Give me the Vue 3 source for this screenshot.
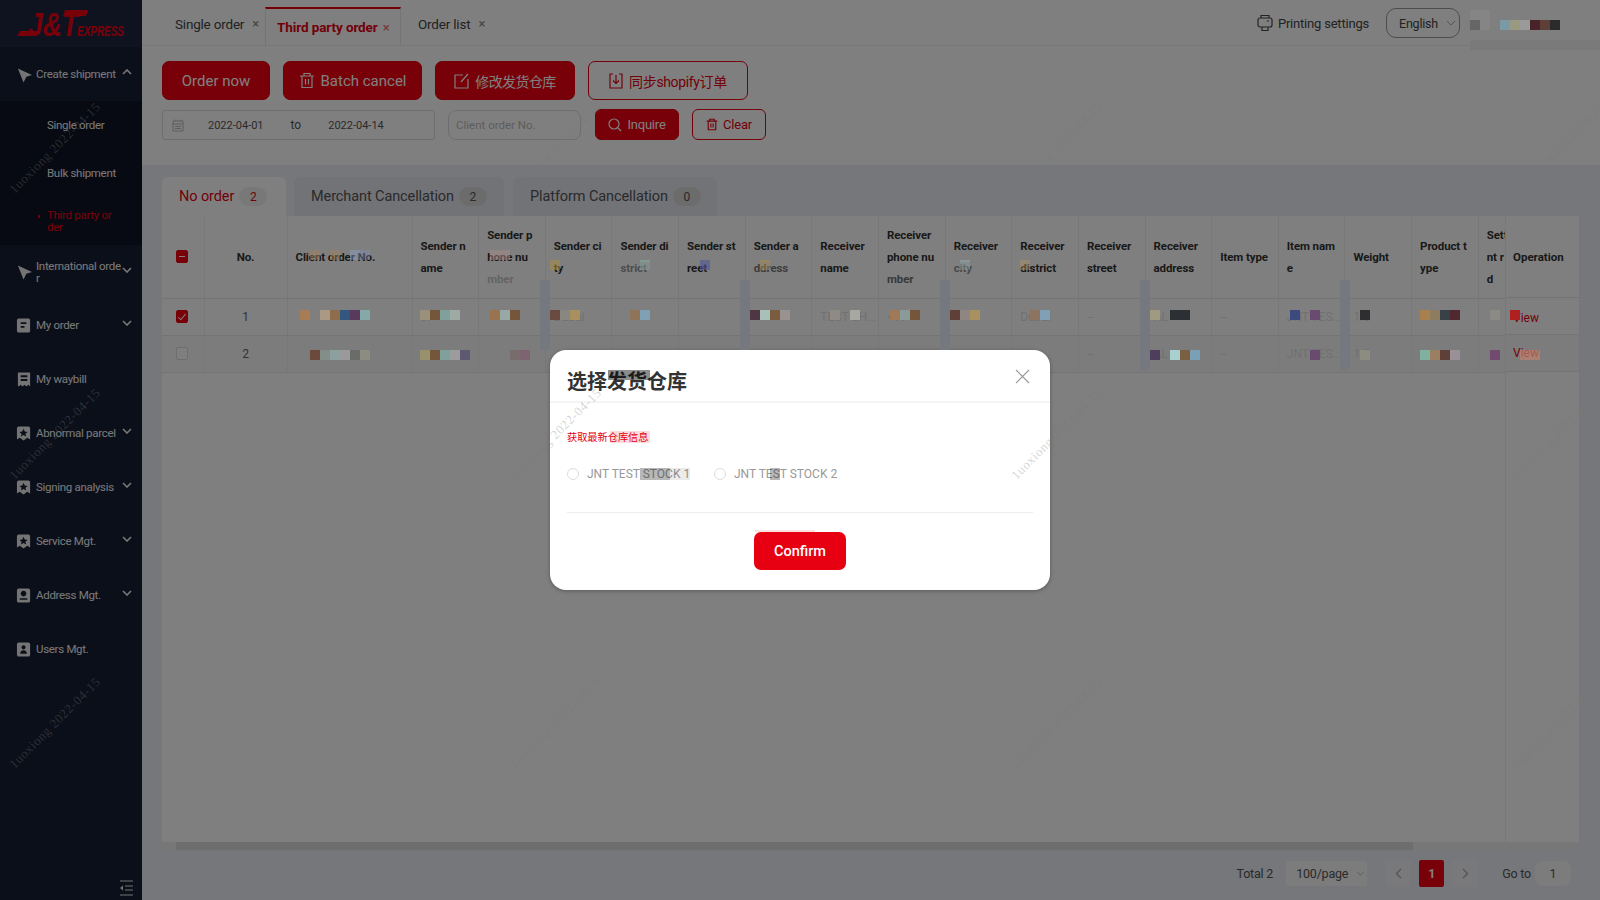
<script setup>
import { ref } from "vue";

const icons = {
  send: "M2 2 L17 9 L11 11 L8 17 Z",
  doc: "M3 1 H13 Q15 1 15 3 V14 Q15 16 13 16 H3 Q1 16 1 14 V3 Q1 1 3 1 Z M5 5 V7 H11 V5 Z M5 9 V11 H9 V9 Z",
  bill: "M2 1 H15 V16 L13 14 L11 16 L9 14 L7 16 L5 14 L3 16 L2 15 Z M5 4 V6 H12 V4 Z M5 8 V10 H12 V8 Z",
  star: "M3 1 H13 Q15 1 15 3 V15 L12 13 L8 16 L4 13 L1 15 V3 Q1 1 3 1 Z M8 3.5 L9.3 6.5 L12.4 6.8 L10 8.8 L10.8 11.8 L8 10.2 L5.2 11.8 L6 8.8 L3.6 6.8 L6.7 6.5 Z",
  addr: "M3 1 H13 Q15 1 15 3 V14 Q15 16 13 16 H3 Q1 16 1 14 V3 Q1 1 3 1 Z M8 3.5 A3 3 0 1 0 8.01 3.5 Z M4 13 H12 V11.5 H4 Z",
  user: "M3 1 H13 Q15 1 15 3 V14 Q15 16 13 16 H3 Q1 16 1 14 V3 Q1 1 3 1 Z M8 4 A2.2 2.2 0 1 0 8.01 4 Z M4.5 13 H11.5 Q11.5 9.2 8 9.2 Q4.5 9.2 4.5 13 Z",
};

const menu = [
  { label: "Create shipment", icon: "send", open: true },
  { label: "International orde\nr", icon: "send", arrow: true, short: true },
  { label: "My order", icon: "doc", arrow: true },
  { label: "My waybill", icon: "bill" },
  { label: "Abnormal parcel", icon: "star", arrow: true },
  { label: "Signing analysis", icon: "star", arrow: true },
  { label: "Service Mgt.", icon: "star", arrow: true },
  { label: "Address Mgt.", icon: "addr", arrow: true },
  { label: "Users Mgt.", icon: "user" },
];

const columns = [
  "Client order No.",
  "Sender n\name",
  "Sender p\nhone nu\nmber",
  "Sender ci\nty",
  "Sender di\nstrict",
  "Sender st\nreet",
  "Sender a\nddress",
  "Receiver\nname",
  "Receiver\nphone nu\nmber",
  "Receiver\ncity",
  "Receiver\ndistrict",
  "Receiver\nstreet",
  "Receiver\naddress",
  "Item type",
  "Item nam\ne",
  "Weight",
  "Product t\nype",
  "Sett\nnt r\nd",
];

const rows = [
  { id: 1, checked: true, cells: ["", "JI", "", "Dubai", "", "", "", "TEST SH...", "+97", "", "Dubai", "--", "AL", "--", "JNT TES...", "1.5", "", ""] },
  { id: 2, checked: false, cells: ["", "", "", "", "", "", "", "", "", "", "", "--", "AL", "--", "JNT TES...", "1.5", "", ""] },
];

const checked = ref(rows.map((r) => r.checked));

// pixelated scribbles and smears sitting on top of the screenshot
function row(y, h, list) {
  return list.map(([x, c, w]) => ({ x, y, w: w || 10, h, c }));
}
const patches = [
  // top right
  { x: 1470, y: 10, w: 20, h: 20, c: "#858585" },
  { x: 1470, y: 40, w: 130, h: 10, c: "#7a7a7a" },
  ...row(20, 10, [
    [1470, "#666666"], [1480, "#858585"], [1500, "#7a9aa5"], [1510, "#9a9a80"],
    [1520, "#9a9a9a"], [1530, "#48242a"], [1540, "#5e3f38"], [1550, "#2b2b2b"],
  ]),
  // vertical smears
  { x: 540, y: 280, w: 10, h: 70, c: "#767880" },
  { x: 740, y: 280, w: 10, h: 70, c: "#767880" },
  { x: 940, y: 280, w: 10, h: 70, c: "#767880" },
  { x: 1140, y: 280, w: 10, h: 90, c: "#767880" },
  { x: 1340, y: 280, w: 10, h: 90, c: "#767880" },
  // header
  ...row(250, 10, [
    [310, "rgba(170,130,90,.45)"], [330, "rgba(170,130,90,.45)"], [350, "rgba(140,165,200,.4)"], [360, "rgba(130,140,180,.4)"],
    [490, "rgba(170,140,140,.5)", 20],
  ]),
  ...row(260, 10, [
    [550, "rgba(170,140,70,.55)"], [640, "rgba(140,180,170,.5)"], [700, "rgba(80,85,150,.6)"],
    [760, "rgba(180,140,70,.5)"], [960, "rgba(150,190,190,.4)"], [1020, "rgba(180,150,100,.4)"],
  ]),
  // faded bits of header text
  { x: 485, y: 272, w: 40, h: 14, c: "rgba(128,128,128,.72)" },
  { x: 618, y: 262, w: 34, h: 14, c: "rgba(128,128,128,.5)" },
  { x: 752, y: 262, w: 38, h: 14, c: "rgba(128,128,128,.35)" },
  { x: 885, y: 272, w: 36, h: 14, c: "rgba(128,128,128,.3)" },
  { x: 952, y: 262, w: 24, h: 14, c: "rgba(128,128,128,.45)" },
  // row 1
  ...row(310, 10, [
    [300, "#a87c55"], [320, "#aa9a85"], [330, "#8e6c4c"], [340, "#33587f"], [350, "#5a3a5c"], [360, "#85a8a8"],
    [420, "#99917a"], [430, "#75563a"], [440, "#80a09c"], [450, "#a0aaa5"],
    [490, "#9a7350"], [500, "#98a8a4"], [510, "#75563a"],
    [550, "#6b4a40"], [560, "#8a8680"], [570, "#a89060"],
    [630, "#90745a"], [640, "#7fa0b5"],
    [750, "#4e3644"], [760, "#a8c0b8"], [770, "#7c5c3e"], [780, "#9a928e"],
    [830, "#908a85"], [850, "#a8a8a0"],
    [890, "#a07a58"], [900, "#8a9a98"], [910, "#75563a"],
    [950, "#5f4038"], [960, "#8e8680"], [970, "#a89060"],
    [1030, "#8d7460"], [1040, "#80a0b5"],
    [1150, "#a09a80"], [1170, "#2c2f33", 20],
    [1290, "#3c4a80"], [1310, "#6b4a70"],
    [1360, "#2e2e30"],
    [1420, "#a8804e"], [1430, "#8e7c60"], [1440, "#3a4048"], [1450, "#502830"],
    [1490, "#8c8a85"], [1510, "#b02020"],
  ]),
  // row 2
  ...row(350, 10, [
    [310, "#6b4a3c"], [320, "#848e88"], [330, "#8ca0a0"], [340, "#9a9a9a"], [350, "#6a6c6a"], [360, "#8c8c80"],
    [420, "#98926c"], [430, "#75563a"], [440, "#80a09c"], [450, "#9c9c9c"], [460, "#5e5870"],
    [510, "#786c6c"], [520, "#7e6470"],
    [1150, "#4e3e5c"], [1170, "#a8d0d0"], [1180, "#7a6040"], [1190, "#7aa0b5"],
    [1310, "#6b4a70"], [1360, "#8c8c80"],
    [1420, "#80b0a0"], [1430, "#9a8060"], [1440, "#5e4038"], [1450, "#9a9098"],
    [1490, "#724a70"],
  ]),
  { x: 1520, y: 350, w: 20, h: 10, c: "rgba(190,130,110,.7)" },
  // dialog
  { x: 608, y: 370, w: 42, h: 10, c: "rgba(0,0,0,.45)" },
  { x: 610, y: 431, w: 40, h: 12, c: "rgba(230,0,18,.14)" },
  { x: 640, y: 468, w: 30, h: 12, c: "rgba(0,0,0,.28)" },
  { x: 670, y: 468, w: 20, h: 12, c: "rgba(0,0,0,.08)" },
  { x: 770, y: 468, w: 10, h: 12, c: "rgba(0,0,0,.28)" },
  { x: 755, y: 530, w: 60, h: 2, c: "rgba(230,0,18,.12)" },
];

const marks = [];
for (const top of [148, 434, 723]) {
  for (const left of [55, 556, 1057, 1558]) {
    marks.push({ left, top });
  }
}
</script>

<template>
  <div class="app">
    <aside class="sidebar">
      <div class="logo">
        <svg width="112" height="32" viewBox="0 0 112 32">
          <polygon points="3,23 20,23 18,28 0,28" fill="#f00012" />
          <polygon points="48,2 71,2 69,8 46,8" fill="#f00012" />
          <text x="11" y="28" class="logo-big" textLength="50" lengthAdjust="spacingAndGlyphs">J&amp;T</text>
          <text x="60" y="28" class="logo-small" textLength="47" lengthAdjust="spacingAndGlyphs">EXPRESS</text>
        </svg>
      </div>
      <nav class="menu">
        <template v-for="item in menu" :key="item.label">
          <div class="menu-item" :class="{ short: item.short }">
            <svg class="menu-icon" width="16" height="17" viewBox="0 0 17 17">
              <path :d="icons[item.icon]" fill="#e8e8e8" fill-rule="evenodd" />
            </svg>
            <span class="menu-label">{{ item.label }}</span>
            <svg v-if="item.arrow || item.open" class="menu-arrow" :class="{ up: item.open }" width="10" height="6" viewBox="0 0 10 6">
              <path d="M1 1 L5 5 L9 1" fill="none" stroke="#f0f0f0" stroke-width="1.6" />
            </svg>
          </div>
          <div v-if="item.open" class="submenu">
            <div class="sub-item">Single order</div>
            <div class="sub-item">Bulk shipment</div>
            <div class="sub-item active">Third party or<br />der</div>
          </div>
        </template>
      </nav>
      <div class="collapse">
        <svg width="15" height="16" viewBox="0 0 15 16">
          <path d="M1 1 H14 M6 6 H14 M6 10 H14 M1 15 H14" stroke="#e8e8e8" stroke-width="1.2" />
          <polygon points="1,8 4,5.5 4,10.5" fill="#e8e8e8" />
        </svg>
      </div>
    </aside>

    <main class="main">
      <header class="topbar">
        <div class="tab"><span>Single order</span><i>×</i></div>
        <div class="tab current"><span>Third party order</span><i>×</i></div>
        <div class="tab"><span>Order list</span><i>×</i></div>
        <div class="top-right">
          <div class="print">
            <svg width="16" height="18" viewBox="0 0 16 18" fill="none" stroke="#444" stroke-width="1.2">
              <rect x="1" y="4" width="14" height="9" rx="2" />
              <path d="M4 4 V1.5 H12 V4 M5 13 V16.5 H11 V13 M10 7 H12" />
            </svg>
            Printing settings
          </div>
          <div class="lang">
            English
            <svg width="10" height="6" viewBox="0 0 10 6"><path d="M1 1 L5 5 L9 1" fill="none" stroke="#aaa" /></svg>
          </div>
        </div>
      </header>

      <section class="toolbar">
        <div class="btn-row">
          <button class="btn big solid wide">Order now</button>
          <button class="btn big solid">
            <svg width="16" height="17" viewBox="0 0 16 17" fill="none" stroke="#fff" stroke-width="1.2"><path d="M1 4 H15 M5 4 V1.5 H11 V4 M3 4 V15.5 H13 V4 M6.5 7 V12.5 M9.5 7 V12.5" /></svg>
            Batch cancel
          </button>
          <button class="btn big solid modify">
            <svg width="15" height="16" viewBox="0 0 15 16" fill="none" stroke="#fff" stroke-width="1.2"><path d="M9 2 H1 V15 H14 V6 M14 1 L7 9" /></svg>
            <span class="cjk">修改发货仓库</span>
          </button>
          <button class="btn big line sync">
            <svg width="14" height="16" viewBox="0 0 14 16" fill="none" stroke="#e60012" stroke-width="1.2"><path d="M4 1 H1 V15 H13 V1 H10 M7 2 V10 M4 7.5 L7 10.5 L10 7.5" /></svg>
            <span class="cjk">同步shopify订单</span>
          </button>
        </div>
        <div class="search-row">
          <div class="date">
            <svg width="12" height="13" viewBox="0 0 12 13" fill="none" stroke="#bbb"><path d="M1 2 H11 V12 H1 Z M1 5 H11 M3 7.5 H9 M3 9.5 H9 M3 .5 V2 M9 .5 V2" /></svg>
            <span class="d1">2022-04-01</span>
            <span class="to">to</span>
            <span class="d2">2022-04-14</span>
          </div>
          <div class="input">Client order No.</div>
          <button class="btn small solid inquire">
            <svg width="14" height="14" viewBox="0 0 14 14" fill="none" stroke="#fff" stroke-width="1.2"><circle cx="6" cy="6" r="5" /><path d="M9.5 9.5 L13 13" /></svg>
            Inquire
          </button>
          <button class="btn small line clear">
            <svg width="12" height="13" viewBox="0 0 16 17" fill="none" stroke="#e60012" stroke-width="1.5"><path d="M1 4 H15 M5 4 V1.5 H11 V4 M3 4 V15.5 H13 V4 M6.5 7 V12.5 M9.5 7 V12.5" /></svg>
            Clear
          </button>
        </div>
      </section>

      <section class="content">
        <div class="tabs">
          <div class="card-tab on">No order <b>2</b></div>
          <div class="card-tab merchant">Merchant Cancellation <b>2</b></div>
          <div class="card-tab platform">Platform Cancellation <b>0</b></div>
        </div>

        <div class="table-wrap">
          <table class="grid">
            <colgroup>
              <col class="c-check" />
              <col class="c-no" />
              <col class="c-client" />
              <col v-for="n in 17" :key="n" class="c-std" />
            </colgroup>
            <thead>
              <tr>
                <th class="center check-cell"><span class="check half"></span></th>
                <th class="center">No.</th>
                <th v-for="col in columns" :key="col">{{ col }}</th>
              </tr>
            </thead>
            <tbody>
              <tr v-for="(r, i) in rows" :key="r.id">
                <td class="center check-cell"><span class="check" :class="{ on: checked[i] }"></span></td>
                <td class="center no">{{ r.id }}</td>
                <td v-for="(val, j) in r.cells" :key="j" class="faint">{{ val }}</td>
              </tr>
            </tbody>
          </table>
          <div class="fixed-col">
            <div class="fixed-head">Operation</div>
            <div class="fixed-cell">View</div>
            <div class="fixed-cell alt">View</div>
          </div>
        </div>
        <div class="scrollbar"><div class="thumb"></div></div>

        <footer class="pager">
          <span class="total">Total 2</span>
          <div class="size">
            100/page
            <svg width="9" height="5" viewBox="0 0 10 6"><path d="M1 1 L5 5 L9 1" fill="none" stroke="#aaa" /></svg>
          </div>
          <div class="page-btn prev">
            <svg width="7" height="11" viewBox="0 0 7 11"><path d="M6 1 L1.5 5.5 L6 10" fill="none" stroke="#aaa" stroke-width="1.4" /></svg>
          </div>
          <div class="page-btn cur">1</div>
          <div class="page-btn next">
            <svg width="7" height="11" viewBox="0 0 7 11"><path d="M1 1 L5.5 5.5 L1 10" fill="none" stroke="#aaa" stroke-width="1.4" /></svg>
          </div>
          <span class="goto">Go to</span>
          <div class="page-input">1</div>
        </footer>
      </section>
    </main>

    <div class="mask">
      <div class="dialog">
        <div class="dialog-head">
          <span class="dialog-title">选择发货仓库</span>
          <svg class="dialog-close" width="15" height="15" viewBox="0 0 15 15"><path d="M1 1 L14 14 M14 1 L1 14" stroke="#999" stroke-width="1.1" /></svg>
        </div>
        <div class="dialog-body">
          <div class="refresh">获取最新仓库信息</div>
          <div class="radios">
            <label class="radio"><i></i>JNT TEST STOCK 1</label>
            <label class="radio"><i></i>JNT TEST STOCK 2</label>
          </div>
          <div class="dialog-foot">
            <button class="confirm">Confirm</button>
          </div>
        </div>
      </div>
    </div>

    <div v-for="(p, i) in patches" :key="'p' + i" class="patch" :style="{ left: p.x + 'px', top: p.y + 'px', width: p.w + 'px', height: p.h + 'px', background: p.c }"></div>
    <div v-for="(m, i) in marks" :key="'m' + i" class="mark" :style="{ left: m.left + 'px', top: m.top + 'px' }">1uoxiong 2022-04-15</div>
  </div>
</template>

<style scoped>
.app {
  display: flex;
  width: 1600px;
  height: 900px;
  overflow: hidden;
  position: relative;
  font-family: Roboto, "Noto Sans CJK SC", sans-serif;
  color: #333;
}

/* sidebar */
.sidebar {
  width: 142px;
  flex: none;
  background: #161e34;
  display: flex;
  flex-direction: column;
}
.logo {
  height: 47px;
  background: #1e2640;
  padding: 8px 0 0 17px;
  box-sizing: border-box;
}
.logo-big {
  font: italic bold 34px "Liberation Sans", sans-serif;
  fill: #f00012;
}
.logo-small {
  font: italic bold 14px "Liberation Sans", sans-serif;
  fill: #f00012;
}
.menu {
  flex: 1;
}
.menu-item {
  height: 54px;
  display: flex;
  align-items: center;
  position: relative;
  padding-left: 16px;
  font-size: 11.5px;
  color: #f2f2f2;
  letter-spacing: -0.3px;
}
.menu-item.short {
  height: 53px;
}
.menu-icon {
  flex: none;
  margin-right: 4px;
}
.menu-label {
  white-space: pre-line;
  line-height: 12px;
}
.menu-arrow {
  position: absolute;
  left: 122px;
  top: 22px;
}
.menu-arrow.up {
  transform: rotate(180deg);
}
.submenu {
  background: #0e1424;
}
.sub-item {
  height: 48px;
  display: flex;
  align-items: center;
  padding-left: 47px;
  font-size: 11.5px;
  line-height: 12px;
  color: #f2f2f2;
  letter-spacing: -0.3px;
  position: relative;
}
.sub-item.active {
  color: #f00012;
}
.sub-item.active::before {
  content: "";
  position: absolute;
  left: 38px;
  top: 18px;
  width: 2px;
  height: 3px;
  background: #f00012;
}
.collapse {
  height: 34px;
  padding: 14px 8px 0 0;
  box-sizing: border-box;
  display: flex;
  justify-content: flex-end;
}

/* header */
.main {
  flex: 1;
  min-width: 0;
  display: flex;
  flex-direction: column;
  background: #fff;
}
.topbar {
  height: 46px;
  box-sizing: border-box;
  flex: none;
  display: flex;
  border-bottom: 1px solid #eee;
  padding-left: 33px;
  font-size: 13.5px;
}
.tab {
  display: flex;
  align-items: center;
  height: 47px;
  color: #444;
  letter-spacing: -0.2px;
}
.tab:first-child {
  width: 90px;
}
.tab i {
  font-style: normal;
  font-size: 13px;
  color: #888;
  margin-left: 8px;
}
.tab.current {
  width: 136px;
  box-sizing: border-box;
  margin-top: 7px;
  height: 38px;
  border-top: 2px solid #e60012;
  border-left: 1px solid #e8e8e8;
  border-right: 1px solid #e8e8e8;
  padding: 0 0 0 11px;
  color: #e60012;
  font-weight: 700;
  font-size: 13.5px;
  letter-spacing: -0.1px;
  margin-right: 17px;
}
.tab.current i {
  color: #e66;
  font-weight: 400;
  margin-left: 5px;
}
.top-right {
  margin-left: auto;
  display: flex;
  align-items: flex-start;
  padding-right: 140px;
}
.print {
  display: flex;
  align-items: center;
  gap: 5px;
  height: 46px;
  font-size: 13px;
  color: #444;
  letter-spacing: -0.2px;
}
.lang {
  margin: 8px 0 0 17px;
  width: 74px;
  height: 30px;
  box-sizing: border-box;
  border: 1px solid #999;
  border-radius: 10px;
  display: flex;
  align-items: center;
  gap: 8px;
  padding-left: 12px;
  font-size: 12.5px;
  color: #444;
  letter-spacing: -0.2px;
}

/* toolbar */
.toolbar {
  height: 119px;
  flex: none;
  box-sizing: border-box;
  padding: 15px 0 0 20px;
}
.btn-row {
  display: flex;
  gap: 13px;
  margin-bottom: 9px;
}
.btn {
  display: flex;
  align-items: center;
  justify-content: center;
  gap: 6px;
  box-sizing: border-box;
  font-family: inherit;
  border: 1px solid #e60012;
  padding: 0;
}
.btn.big {
  height: 39px;
  width: 139px;
  border-radius: 7px;
  font-size: 15px;
}
.btn.big.wide {
  width: 108px;
}
.btn.big.modify {
  width: 140px;
}
.btn.big.sync {
  width: 160px;
}
.sync .cjk {
  letter-spacing: -0.35px;
}
.solid {
  background: #f00010;
  color: #fff;
}
.line {
  background: transparent;
  color: #e60012;
}
.cjk {
  font-size: 14px;
  letter-spacing: -0.6px;
}
.search-row {
  display: flex;
  align-items: center;
}
.date {
  width: 273px;
  height: 30px;
  box-sizing: border-box;
  border: 1px solid #ddd;
  border-radius: 3px;
  display: flex;
  align-items: center;
  padding: 1px 0 0 9px;
  font-size: 11px;
  color: #555;
}
.d1 {
  margin-left: 24px;
}
.to {
  margin-left: 27px;
  font-size: 12px;
}
.d2 {
  margin-left: 27px;
}
.input {
  width: 133px;
  height: 30px;
  box-sizing: border-box;
  margin-left: 13px;
  border: 1px solid #ddd;
  border-radius: 8px;
  padding-left: 7px;
  line-height: 28px;
  font-size: 11.5px;
  color: #bbb;
}
.btn.small {
  height: 31px;
  border-radius: 6px;
  font-size: 13px;
  letter-spacing: -0.2px;
  gap: 5px;
}
.inquire {
  width: 84px;
  margin-left: 14px;
}
.clear {
  width: 74px;
  margin-left: 13px;
}

/* tabs + table */
.content {
  flex: 1;
  min-height: 0;
  background: #eceef4;
  padding: 12px 21px 0 20px;
  display: flex;
  flex-direction: column;
}
.tabs {
  display: flex;
  height: 39px;
  flex: none;
}
.card-tab {
  display: flex;
  align-items: center;
  padding-left: 17px;
  background: #e4e6ed;
  border-radius: 6px 6px 0 0;
  font-size: 14.5px;
  color: #555;
  letter-spacing: -0.1px;
  width: 204px;
  box-sizing: border-box;
  gap: 5px;
}
.card-tab b {
  font-weight: 400;
  font-size: 12px;
  width: 28px;
  height: 19px;
  border-radius: 10px;
  background: #d8d8d8;
  text-align: center;
  line-height: 20px;
}
.card-tab.on {
  width: 124px;
  background: #fff;
  color: #e60012;
  margin-right: 8px;
}
.card-tab.on b {
  background: #f0f0f0;
}
.card-tab.merchant {
  width: 210px;
  margin-right: 9px;
}
.table-wrap {
  flex: 1;
  min-height: 0;
  position: relative;
  background: #fff;
  overflow: hidden;
}
.grid {
  table-layout: fixed;
  border-collapse: collapse;
  width: 1383px;
  font-size: 12px;
}
.c-check {
  width: 42px;
}
.c-no {
  width: 83px;
}
.c-client {
  width: 125px;
}
.c-std {
  width: 66.65px;
}
th,
td {
  padding: 0 8px;
  border-right: 1px solid #f0f0f0;
  border-bottom: 1px solid #e8e8e8;
  box-sizing: border-box;
  text-align: left;
  overflow: hidden;
}
th {
  height: 82px;
  font-size: 11.5px;
  font-weight: 700;
  line-height: 22px;
  letter-spacing: -0.1px;
  white-space: pre-line;
  color: #333;
}
td {
  height: 37px;
  white-space: nowrap;
}
tbody tr:nth-child(2) td {
  background: #f9f9f9;
}
.center {
  text-align: center;
}
th.check-cell,
td.check-cell {
  padding: 0 10px 0 8px;
}
.no {
  color: #666;
}
.faint {
  color: #e2e2e2;
  font-size: 12px;
}
.check {
  display: block;
  width: 12px;
  height: 13px;
  margin: 0 auto;
  box-sizing: border-box;
  border: 1px solid #ddd;
  border-radius: 2px;
  background: #fff;
  position: relative;
}
.check.half,
.check.on {
  background: #f00010;
  border-color: #f00010;
}
.check.half::after {
  content: "";
  position: absolute;
  left: 2px;
  right: 2px;
  top: 5px;
  height: 1px;
  background: #fff;
}
.check.on::after {
  content: "";
  position: absolute;
  left: 3px;
  top: 1px;
  width: 3px;
  height: 7px;
  border-right: 1px solid #fff;
  border-bottom: 1px solid #fff;
  transform: rotate(40deg);
}
.fixed-col {
  position: absolute;
  right: 0;
  top: 0;
  bottom: 0;
  width: 74px;
  background: #fff;
  border-left: 1px solid #f0f0f0;
  box-sizing: border-box;
  font-size: 12px;
}
.fixed-head {
  height: 82px;
  line-height: 82px;
  padding-left: 7px;
  font-size: 11.5px;
  font-weight: 700;
  border-bottom: 1px solid #e8e8e8;
  box-sizing: border-box;
}
.fixed-cell {
  height: 37px;
  box-sizing: border-box;
  padding: 13px 0 0 7px;
  color: #e60012;
  border-bottom: 1px solid #e8e8e8;
}
.fixed-cell.alt {
  background: #f9f9f9;
  padding-top: 11px;
}
.scrollbar {
  height: 8px;
  flex: none;
  background: #eee;
  padding-left: 14px;
}
.thumb {
  width: 1237px;
  height: 8px;
  background: #dcdcdc;
}

/* pagination */
.pager {
  height: 46px;
  margin-bottom: 4px;
  flex: none;
  display: flex;
  align-items: center;
  font-size: 12.5px;
  color: #555;
  padding: 0 8px 0 0;
  justify-content: flex-end;
  letter-spacing: -0.2px;
}
.size {
  width: 81px;
  height: 25px;
  margin: 0 18px 0 13px;
  background: #f8f8fa;
  border-radius: 2px;
  display: flex;
  align-items: center;
  gap: 8px;
  padding-left: 10px;
  box-sizing: border-box;
}
.page-btn {
  width: 26px;
  height: 27px;
  background: #f2f3f7;
  display: flex;
  align-items: center;
  justify-content: center;
  border-radius: 2px;
}
.page-btn.cur {
  width: 25px;
  background: #f00010;
  color: #fff;
  font-weight: 700;
  margin: 0 8px;
}
.goto {
  margin: 0 4px 0 24px;
}
.page-input {
  width: 36px;
  height: 25px;
  background: #f8f8fa;
  border-radius: 8px;
  text-align: center;
  line-height: 25px;
}

/* dialog */
.mask {
  position: absolute;
  inset: 0;
  background: rgba(0, 0, 0, 0.5);
  display: flex;
  justify-content: center;
  padding-top: 350px;
  box-sizing: border-box;
}
.dialog {
  width: 500px;
  height: 240px;
  background: #fff;
  border-radius: 16px;
  box-shadow: 0 1px 4px rgba(0, 0, 0, 0.3);
}
.dialog-head {
  height: 53px;
  box-sizing: border-box;
  border-bottom: 2px solid #f4f4f4;
  padding: 18px 17px 0;
  display: flex;
  justify-content: space-between;
  position: relative;
}
.dialog-title {
  font-size: 20px;
  font-weight: 700;
  line-height: 28px;
  color: #333;
}
.dialog-close {
  position: absolute;
  right: 20px;
  top: 19px;
}
.dialog-body {
  padding: 0 17px;
}
.refresh {
  margin-top: 28px;
  font-size: 10.2px;
  line-height: 14px;
  color: #e60012;
}
.radios {
  display: flex;
  gap: 26px;
  margin-top: 21px;
  height: 46px;
}
.radio {
  display: flex;
  align-items: flex-start;
  gap: 8px;
  width: 121px;
  font-size: 12px;
  line-height: 16px;
  color: #999;
  white-space: nowrap;
}
.radio i {
  display: block;
  width: 12px;
  height: 12px;
  margin-top: 2px;
  flex: none;
  border: 1px solid #ddd;
  border-radius: 50%;
  box-sizing: border-box;
}
.dialog-foot {
  border-top: 1px solid #eee;
  padding-top: 19px;
  display: flex;
  justify-content: center;
}
.confirm {
  width: 92px;
  height: 38px;
  background: #e60012;
  border: 0;
  border-radius: 7px;
  color: #fff;
  font-family: inherit;
  font-size: 14.5px;
  font-weight: 500;
}

/* scribbles and watermark */
.patch {
  position: absolute;
}
.mark {
  position: absolute;
  transform: translate(-50%, -50%) rotate(-45deg);
  font-family: "Liberation Serif", serif;
  font-size: 13px;
  letter-spacing: 0.5px;
  white-space: nowrap;
  color: rgba(120, 120, 120, 0.32);
  pointer-events: none;
}
</style>

<style>
html,
body {
  background: #808080;
}
</style>
